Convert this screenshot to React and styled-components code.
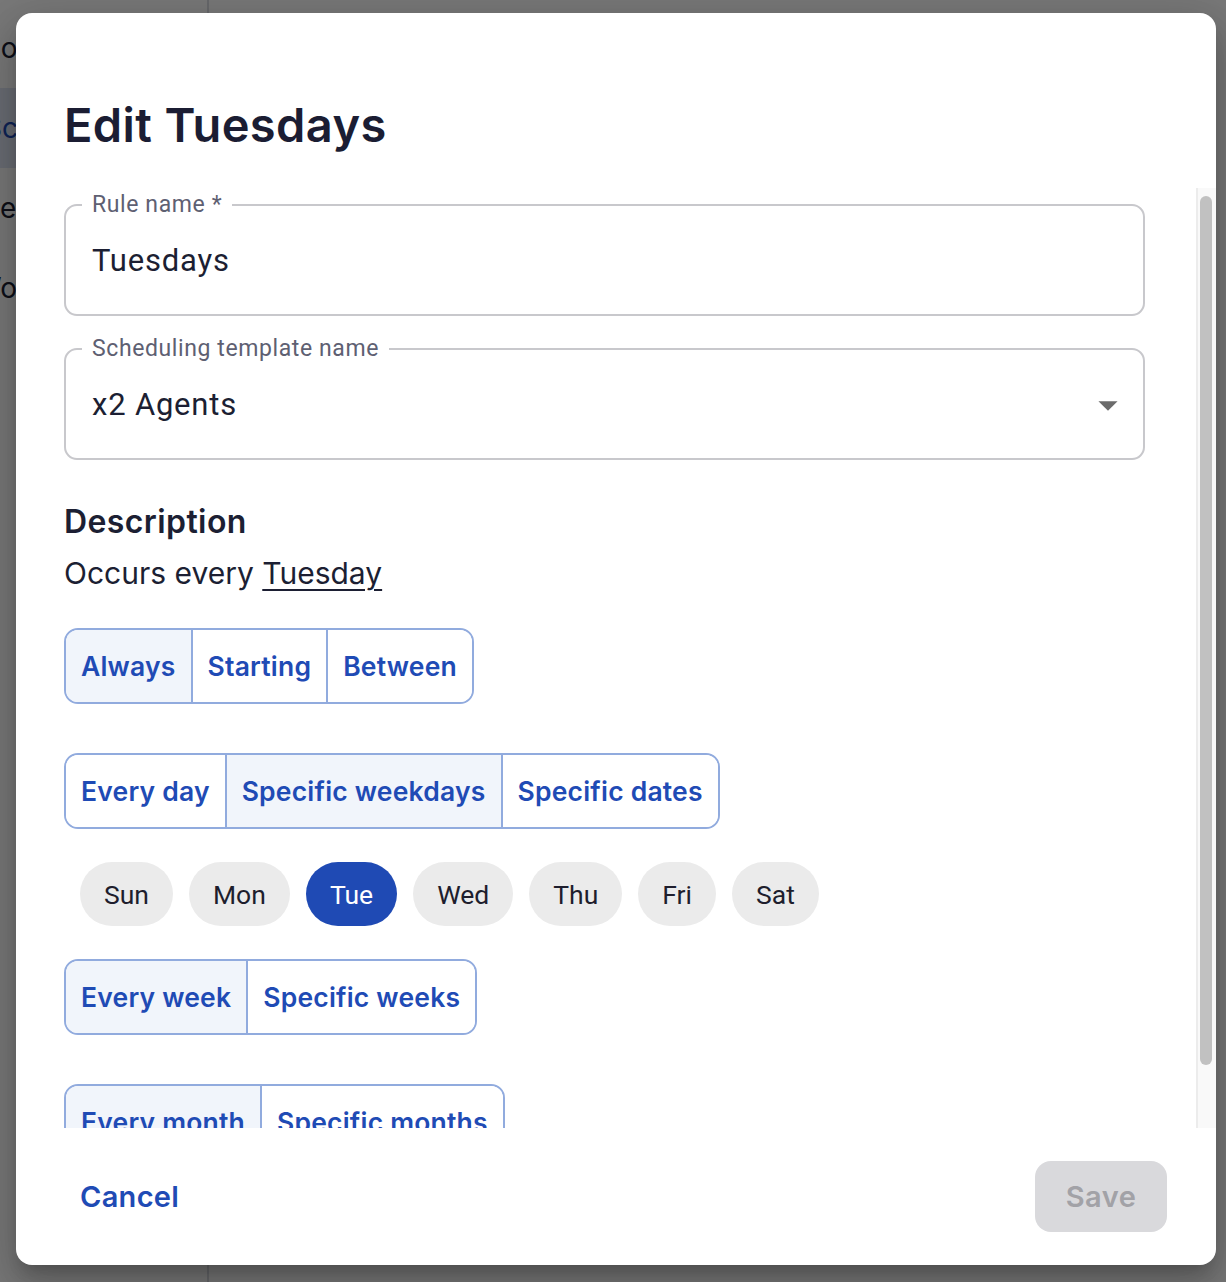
import React from 'react';
import styled, { createGlobalStyle } from 'styled-components';

const GlobalStyle = createGlobalStyle`
  html, body {
    margin: 0;
    padding: 0;
    background: #fff;
  }
  * {
    box-sizing: border-box;
  }
`;

const Page = styled.div`
  position: relative;
  width: 1226px;
  height: 1282px;
  overflow: hidden;
  display: flex;
  font-family: Inter, "Liberation Sans", sans-serif;
`;

const Sidebar = styled.nav`
  width: 209px;
  flex-shrink: 0;
  border-right: 2px solid #dcdde3;
  padding-top: 8px;
  display: flex;
  flex-direction: column;
`;

const NavItem = styled.div`
  height: 80px;
  display: flex;
  align-items: center;
  font-size: 28px;
  white-space: nowrap;
  color: ${props => (props.$active ? '#1f4bb5' : '#1c1f33')};
  background: ${props => (props.$active ? '#dfe6f5' : 'transparent')};
  span {
    margin-left: ${props => props.$shift}px;
  }
`;

const Main = styled.main`
  flex: 1;
  background: #fff;
`;

const Backdrop = styled.div`
  position: absolute;
  inset: 0;
  background: rgba(0, 0, 0, 0.53);
`;

const Dialog = styled.div`
  position: absolute;
  left: 16px;
  top: 13px;
  width: 1200px;
  height: 1252px;
  background: #fff;
  border-radius: 16px;
  display: flex;
  flex-direction: column;
  overflow: hidden;
  box-shadow: 0 11px 15px -7px rgba(0, 0, 0, 0.2),
    0 24px 38px 3px rgba(0, 0, 0, 0.14), 0 9px 46px 8px rgba(0, 0, 0, 0.12);
`;

const Header = styled.div`
  padding: 84px 48px 35px;
  flex-shrink: 0;
`;

const Title = styled.h1`
  margin: 0;
  font-family: Inter, "Liberation Sans", sans-serif;
  font-size: 47px;
  line-height: 56px;
  font-weight: 600;
  color: #1b1d33;
  letter-spacing: 0.4px;
`;

const ScrollArea = styled.div`
  flex: 1;
  min-height: 0;
  display: flex;
`;

const Content = styled.div`
  flex: 1;
  min-width: 0;
  overflow: hidden;
  padding: 5px 51px 48px 48px;
  display: flex;
  flex-direction: column;
  align-items: stretch;
`;

const Rail = styled.div`
  width: 20px;
  flex-shrink: 0;
  background: #f9f9f9;
  border-left: 2px solid #ececec;
  padding: 8px 4px 63px 2px;
  display: flex;
`;

const Thumb = styled.div`
  flex: 1;
  background: #c1c1c1;
  border-radius: 6px;
`;

const Field = styled.fieldset`
  margin: ${props => props.$mt || 0}px 0 0;
  padding: 26px 26px 35px;
  border: 2px solid #c8c8cc;
  border-radius: 13px;
  display: flex;
  align-items: center;
  justify-content: space-between;
  flex-shrink: 0;
  min-width: 0;
`;

const Legend = styled.legend`
  margin-left: -10px;
  padding: 0 10px;
  font-family: Roboto, "Liberation Sans", sans-serif;
  font-size: 23px;
  line-height: 24px;
  letter-spacing: 0.6px;
  color: #5e6072;
`;

const FieldValue = styled.div`
  font-family: Roboto, "Liberation Sans", sans-serif;
  font-size: 31px;
  line-height: 36px;
  letter-spacing: 0.8px;
  color: #1c1f33;
`;

const Caret = styled.svg`
  width: 46px;
  height: 46px;
  margin: -5px -14px -5px 0;
  fill: #6b6b6b;
`;

const Heading = styled.h2`
  margin: 42px 0 0;
  font-size: 32px;
  line-height: 40px;
  font-weight: 600;
  letter-spacing: 0.4px;
  color: #1c1f33;
`;

const Sentence = styled.p`
  margin: 11px 0 0;
  font-size: 30px;
  line-height: 40px;
  color: #1c1f33;

  u {
    text-decoration-thickness: 2px;
    text-underline-offset: 5px;
  }
`;

const Group = styled.div`
  align-self: flex-start;
  margin-top: ${props => props.$mt}px;
  display: inline-flex;
  border: 2px solid #91abde;
  border-radius: 14px;
  overflow: hidden;
  flex-shrink: 0;
`;

const Segment = styled.button`
  height: 72px;
  padding: 0 15px;
  margin: 0;
  border: none;
  border-left: 2px solid #91abde;
  background: ${props => (props.$selected ? '#f1f5fb' : '#fff')};
  color: #1f4bb5;
  font-family: Inter, "Liberation Sans", sans-serif;
  font-size: 26.5px;
  font-weight: 600;
  letter-spacing: 0.2px;
  cursor: pointer;

  &:first-child {
    border-left: none;
  }
`;

const DayRow = styled.div`
  margin-top: 33px;
  padding-left: 16px;
  display: flex;
  gap: 16px;
  flex-shrink: 0;
`;

const DayChip = styled.button`
  height: 64px;
  padding: 0 24px;
  border: none;
  border-radius: 32px;
  background: ${props => (props.$selected ? '#1f4ab4' : '#ebebeb')};
  color: ${props => (props.$selected ? '#fff' : '#1e1e2d')};
  font-family: Roboto, "Liberation Sans", sans-serif;
  font-size: 26.5px;
  cursor: pointer;
`;

const Footer = styled.div`
  flex-shrink: 0;
  height: 137px;
  padding: 0 49px 0 48px;
  display: flex;
  align-items: center;
  justify-content: space-between;
`;

const TextButton = styled.button`
  height: 56px;
  padding: 0 16px;
  border: none;
  background: transparent;
  color: #1f4bb5;
  font-family: Inter, "Liberation Sans", sans-serif;
  font-size: 29px;
  font-weight: 600;
  letter-spacing: 0.3px;
  cursor: pointer;
`;

const SaveButton = styled.button`
  width: 132px;
  height: 71px;
  border: none;
  border-radius: 16px;
  background: #d9d9dc;
  color: #a2a2a7;
  font-family: Inter, "Liberation Sans", sans-serif;
  font-size: 29px;
  font-weight: 600;
  letter-spacing: 0.5px;
`;

const days = ['Sun', 'Mon', 'Tue', 'Wed', 'Thu', 'Fri', 'Sat'];

const SegmentGroup = ({ options, selected, mt }) => (
  <Group $mt={mt}>
    {options.map(option => (
      <Segment key={option} $selected={option === selected}>
        {option}
      </Segment>
    ))}
  </Group>
);

const App = () => {
  return (
    <>
      <GlobalStyle />
      <Page>
        <Sidebar>
          <NavItem $shift={-20}><span>Hours</span></NavItem>
          <NavItem $shift={-16} $active><span>Schedules</span></NavItem>
          <NavItem $shift={-18}><span>Segments</span></NavItem>
          <NavItem $shift={-26}><span>Workflows</span></NavItem>
        </Sidebar>
        <Main />
        <Backdrop />
        <Dialog>
          <Header>
            <Title>Edit Tuesdays</Title>
          </Header>
          <ScrollArea>
            <Content>
              <Field>
                <Legend>Rule name *</Legend>
                <FieldValue>Tuesdays</FieldValue>
              </Field>
              <Field $mt={21}>
                <Legend>Scheduling template name</Legend>
                <FieldValue>x2 Agents</FieldValue>
                <Caret viewBox="0 0 24 24">
                  <path d="M7 10l5 5 5-5z" />
                </Caret>
              </Field>
              <Heading>Description</Heading>
              <Sentence>
                Occurs every <u>Tuesday</u>
              </Sentence>
              <SegmentGroup mt={35} options={['Always', 'Starting', 'Between']} selected="Always" />
              <SegmentGroup
                mt={49}
                options={['Every day', 'Specific weekdays', 'Specific dates']}
                selected="Specific weekdays"
              />
              <DayRow>
                {days.map(day => (
                  <DayChip key={day} $selected={day === 'Tue'}>
                    {day}
                  </DayChip>
                ))}
              </DayRow>
              <SegmentGroup mt={33} options={['Every week', 'Specific weeks']} selected="Every week" />
              <SegmentGroup mt={49} options={['Every month', 'Specific months']} selected="Every month" />
            </Content>
            <Rail>
              <Thumb />
            </Rail>
          </ScrollArea>
          <Footer>
            <TextButton>Cancel</TextButton>
            <SaveButton disabled>Save</SaveButton>
          </Footer>
        </Dialog>
      </Page>
    </>
  );
};

export default App;
